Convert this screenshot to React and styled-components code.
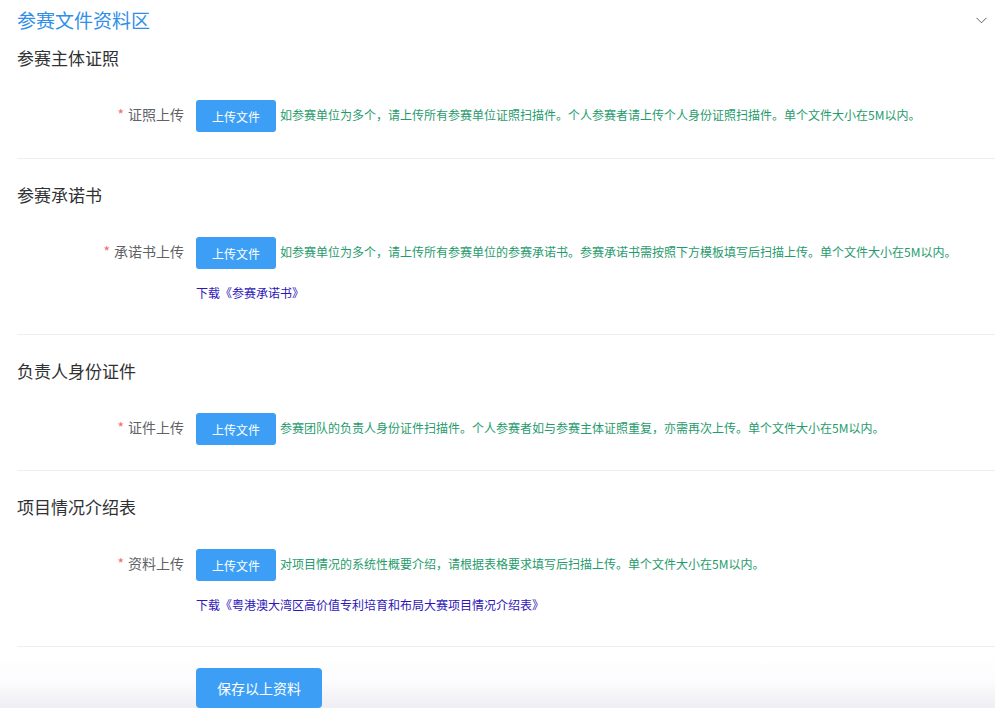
import React from 'react';
import styled, { createGlobalStyle } from 'styled-components';

const GlobalStyle = createGlobalStyle`
    html, body {
        margin: 0;
        padding: 0;
    }
    body {
        min-height: 708px;
        background: linear-gradient(to bottom, #ffffff 0, #ffffff 655px, #fdfcfe 680px, #efeef2 708px);
        font-family: "Noto Sans CJK SC", "Noto Sans", sans-serif;
        color: #303133;
    }
`;

const Page = styled.div`
    padding-left: 17px;
`;

const Header = styled.div`
    display: flex;
    align-items: center;
    justify-content: space-between;
    height: 40px;
    padding-right: 8px;
`;

const Title = styled.h2`
    margin: 0;
    font-size: 19px;
    line-height: 28px;
    font-weight: 400;
    color: #2f8fe8;
`;

const Section = styled.section`
    padding-top: ${p => (p.$first ? '6px' : '24px')};
    padding-bottom: ${p => (p.$first ? '26px' : '25px')};
    border-bottom: 1px solid #eceef2;
`;

const SectionTitle = styled.h3`
    margin: 0 0 30px;
    font-size: 17px;
    line-height: 24px;
    font-weight: 400;
    color: #303133;
`;

const Row = styled.div`
    display: grid;
    grid-template-columns: 167px auto 1fr;
    column-gap: 12px;
    align-items: center;
`;

const Label = styled.label`
    text-align: right;
    font-size: 14px;
    line-height: 20px;
    color: #606266;
    margin-top: -5px;

    &::before {
        content: '*';
        color: #f56c6c;
        margin-right: 4px;
    }
`;

const UploadButton = styled.button`
    width: 80px;
    height: 32px;
    border: none;
    border-radius: 3px;
    background: #3c9ff5;
    color: #fff;
    font-family: inherit;
    font-size: 12px;
    padding: 0;
`;

const Hint = styled.span`
    margin-left: -8px;
    margin-top: -2px;
    font-size: 12px;
    line-height: 18px;
    color: #1f9b6c;
    white-space: nowrap;
`;

const DownloadLink = styled.a`
    display: block;
    margin: 14px 0 6px 179px;
    font-size: 12px;
    line-height: 20px;
    color: #2e16b8;
    text-decoration: none;
`;

const Footer = styled.div`
    padding: 21px 0 0 179px;
`;

const SaveButton = styled.button`
    width: 126px;
    height: 40px;
    border: none;
    border-radius: 4px;
    background: #3c9ff5;
    color: #fff;
    font-family: inherit;
    font-size: 14px;
    padding: 0;
`;

const Chevron = () => (
    <svg width="11" height="7" viewBox="0 0 11 7" fill="none">
        <path d="M0.5 0.8 L5.5 5.8 L10.5 0.8" stroke="#606266" strokeWidth="1" />
    </svg>
);

const sections = [
    {
        title: '参赛主体证照',
        label: '证照上传',
        hint: '如参赛单位为多个，请上传所有参赛单位证照扫描件。个人参赛者请上传个人身份证照扫描件。单个文件大小在5M以内。',
    },
    {
        title: '参赛承诺书',
        label: '承诺书上传',
        hint: '如参赛单位为多个，请上传所有参赛单位的参赛承诺书。参赛承诺书需按照下方模板填写后扫描上传。单个文件大小在5M以内。',
        link: '下载《参赛承诺书》',
    },
    {
        title: '负责人身份证件',
        label: '证件上传',
        hint: '参赛团队的负责人身份证件扫描件。个人参赛者如与参赛主体证照重复，亦需再次上传。单个文件大小在5M以内。',
    },
    {
        title: '项目情况介绍表',
        label: '资料上传',
        hint: '对项目情况的系统性概要介绍，请根据表格要求填写后扫描上传。单个文件大小在5M以内。',
        link: '下载《粤港澳大湾区高价值专利培育和布局大赛项目情况介绍表》',
    },
];

const App = () => {
    return (
        <Page>
            <GlobalStyle />
            <Header>
                <Title>参赛文件资料区</Title>
                <Chevron />
            </Header>
            {sections.map((s, i) => (
                <Section key={s.title} $first={i === 0}>
                    <SectionTitle>{s.title}</SectionTitle>
                    <Row>
                        <Label>{s.label}</Label>
                        <UploadButton>上传文件</UploadButton>
                        <Hint>{s.hint}</Hint>
                    </Row>
                    {s.link && <DownloadLink href="#">{s.link}</DownloadLink>}
                </Section>
            ))}
            <Footer>
                <SaveButton>保存以上资料</SaveButton>
            </Footer>
        </Page>
    );
};

export default App;
